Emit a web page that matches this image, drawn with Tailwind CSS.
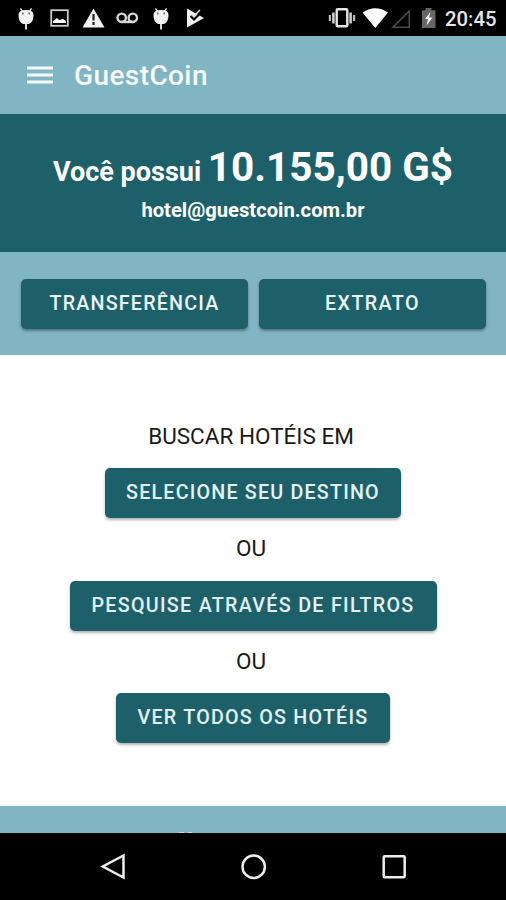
<!DOCTYPE html>
<html lang="pt-BR">
  <head>
    <meta charset="UTF-8" />
    <meta name="viewport" content="width=device-width, initial-scale=1.0" />
    <title>GuestCoin</title>
    <script src="https://cdn.jsdelivr.net/npm/@tailwindcss/browser@4"></script>
  </head>

  <body class="font-[Roboto,sans-serif] bg-white w-[506px] h-[900px] flex flex-col overflow-hidden">
    <!-- Status bar -->
    <div class="h-9 shrink-0 bg-black text-white flex items-center justify-between">
      <svg class="w-[220px] h-9" viewBox="0 0 220 36" fill="none">
        <g fill="#f2f2f2" stroke="#f2f2f2">
          <path d="M20.500 8.300l2 3M31.500 8.300l-2 3" stroke-width="1.300" />
          <path d="M18.500 15q0-5 7.500-5t7.500 5q0 7-4.500 9h-6q-4.500-2-4.500-9z" stroke="none" />
          <path d="M26 22v7.500" stroke-width="1.800" />
        </g>
        <path d="M22.800 12.500v2M29.200 12.500v2" stroke="#333" stroke-width="1.100" />
        <rect x="51.200" y="10.200" width="16.600" height="15.600" stroke="#c9c9c9" stroke-width="1.800" />
        <path d="M53 23v-2l4-3 2 2 4-1 3 2v2z" fill="#fff" />
        <path d="M93.500 8.500L104.500 27.500H82.500z" fill="#f2f2f2" />
        <path d="M93.500 14v6.500M93.500 22v3" stroke="#222" stroke-width="2.200" />
        <g stroke="#d8d8d8" stroke-width="2.400">
          <circle cx="121.700" cy="17.800" r="4.200" />
          <circle cx="132.800" cy="17.800" r="4.200" />
          <path d="M121.500 22h11.500" />
        </g>
        <g fill="#f2f2f2" stroke="#f2f2f2">
          <path d="M155.500 8.300l2 3M166.500 8.300l-2 3" stroke-width="1.300" />
          <path d="M153.500 15q0-5 7.500-5t7.500 5q0 7-4.500 9h-6q-4.500-2-4.500-9z" stroke="none" />
          <path d="M161 22v7.500" stroke-width="1.800" />
        </g>
        <path d="M157.800 12.500v2M164.200 12.500v2" stroke="#333" stroke-width="1.100" />
        <path d="M187 8.500l17 9.500-17 9.500z" fill="#f2f2f2" />
        <path d="M190.500 16l3.500 3.500 8.500-8.500" stroke="#000" stroke-width="2.200" />
        <path d="M192 14l2 2 6-6" stroke="#ddd" stroke-width="1.500" />
      </svg>
      <div class="flex items-center">
        <svg class="w-[120px] h-9" viewBox="325 0 120 36" fill="none">
          <rect x="336.700" y="9.200" width="10.600" height="17" rx="1" stroke="#e6e6e6" stroke-width="2.400" />
          <path d="M333.400 12.500v11M350.600 12.500v11" stroke="#ccc" stroke-width="2.600" />
          <path d="M329.900 15v6M354.100 15v6" stroke="#bbb" stroke-width="2.200" />
          <path d="M375.300 28L362.500 12.500q12.800-8.500 25.500 0z" fill="#fff" />
          <path d="M409.300 11v16.300H393z" stroke="#4a4a4a" stroke-width="1.600" />
          <path d="M425.500 8h6v2.200h4V28h-13.500V10.200h3.500z" fill="#666" />
          <path d="M430.500 12l-5.500 7h3l-1.500 6.500 6-8h-3.500z" fill="#fff" />
        </svg>
        <span class="w-[61px] text-[20.300px] leading-9 font-medium text-[#e6e6e6] pt-0.5">20:45</span>
      </div>
    </div>

    <!-- Toolbar -->
    <header class="h-[78px] shrink-0 bg-[#82b5c4] flex items-center gap-[21px] pl-[27px]">
      <svg class="w-[26px] h-5" viewBox="0 0 26 20" stroke="#f5fafb" stroke-width="2.900">
        <path d="M0 3h26M0 10h26M0 17h26" />
      </svg>
      <h1 class="text-[28px] leading-9 font-medium tracking-[0.400px] text-[#f5fafb] pt-0.5">GuestCoin</h1>
    </header>

    <!-- Balance -->
    <section class="h-[138px] shrink-0 bg-[#1e606a] text-white text-center font-bold pt-[26px]">
      <p class="text-[27px] leading-[54px] whitespace-nowrap">
        Você possui <span class="text-[40.500px]">10.155,00 G$</span>
      </p>
      <p class="text-[20.200px] leading-7 -mt-[3px]">hotel@guestcoin.com.br</p>
    </section>

    <!-- Account actions -->
    <section class="h-[103px] shrink-0 bg-[#82b5c4] grid grid-cols-2 gap-[11px] px-5 pt-[27px] pl-[21px]">
      <button class="h-[50px] rounded-[5px] bg-[#1e606a] text-[#eaf5f7] text-[19.700px] font-medium tracking-[1.200px] shadow-[0_2px_3px_rgba(0,0,0,0.35)]">TRANSFERÊNCIA</button>
      <button class="h-[50px] rounded-[5px] bg-[#1e606a] text-[#eaf5f7] text-[19.700px] font-medium tracking-[1.400px] shadow-[0_2px_3px_rgba(0,0,0,0.35)]">EXTRATO</button>
    </section>

    <!-- Hotel search -->
    <main class="h-[451px] shrink-0 bg-white flex flex-col items-center pt-[63px] text-[22.500px] leading-9 text-[#1a1a1a]">
      <p class="mr-1">BUSCAR HOTÉIS EM</p>
      <button class="mt-[14px] w-[296px] h-[50px] rounded-[5px] bg-[#1e606a] text-[#e2f3f6] text-[19.700px] font-medium tracking-[1.200px] shadow-[0_2px_3px_rgba(0,0,0,0.3)]">SELECIONE SEU DESTINO</button>
      <p class="mt-[12px] mr-1">OU</p>
      <button class="mt-[15px] w-[367px] h-[50px] rounded-[5px] bg-[#1e606a] text-[#e2f3f6] text-[19.700px] font-medium tracking-[1.300px] shadow-[0_2px_3px_rgba(0,0,0,0.3)]">PESQUISE ATRAVÉS DE FILTROS</button>
      <p class="mt-[12px] mr-1">OU</p>
      <button class="mt-[14px] w-[274px] h-[50px] rounded-[5px] bg-[#1e606a] text-[#e2f3f6] text-[19.700px] font-medium tracking-[1.250px] shadow-[0_2px_3px_rgba(0,0,0,0.3)]">VER TODOS OS HOTÉIS</button>
    </main>

    <!-- Next section, cut off by the navigation bar -->
    <section class="h-[27px] shrink-0 bg-[#82b5c4] flex items-end gap-1 pl-[179px]">
      <span class="w-[5px] h-px bg-[#c3dce3]"></span>
      <span class="w-1 h-px bg-[#c3dce3]"></span>
    </section>

    <!-- Navigation bar -->
    <nav class="h-[67px] shrink-0 bg-black">
      <svg class="w-[506px] h-[67px]" viewBox="0 0 506 67" fill="none" stroke="#ededed" stroke-width="2.500">
        <path d="M123.500 22.500v22L102.800 33.500z" />
        <circle cx="253.700" cy="33.700" r="11.200" />
        <rect x="383.700" y="23.200" width="21" height="21" rx="1" />
      </svg>
    </nav>
  </body>
</html>
